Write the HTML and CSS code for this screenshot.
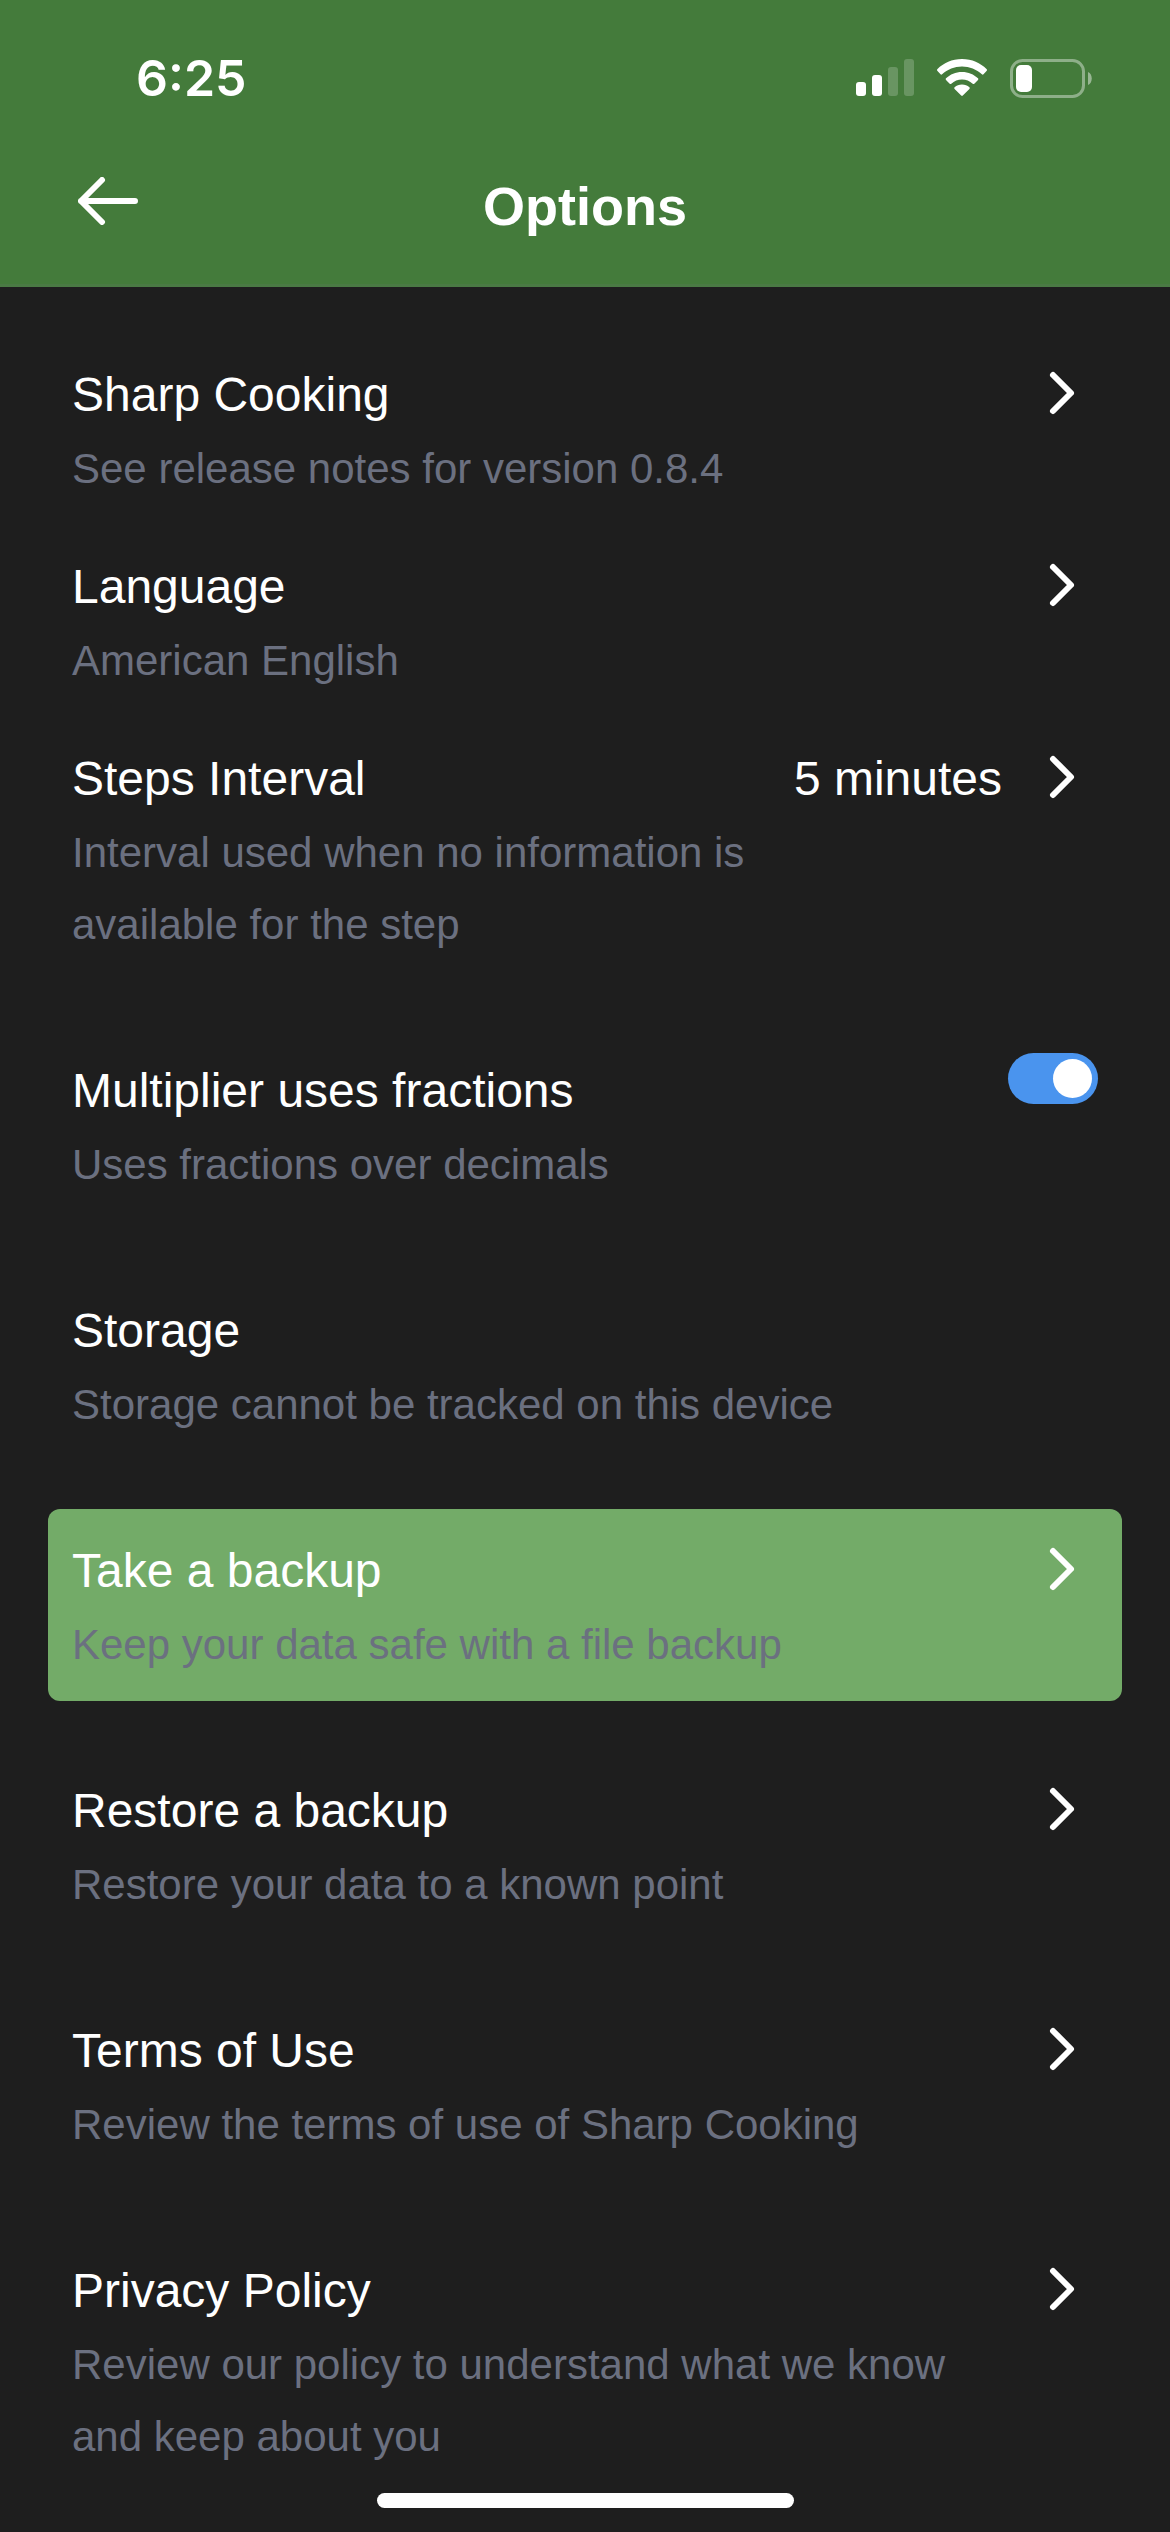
FILE: index.html
```html
<!DOCTYPE html>
<html lang="en">
<head>
<meta charset="utf-8">
<meta name="viewport" content="width=device-width, initial-scale=1">
<title>Options</title>
<link rel="stylesheet" href="styles.css">
</head>
<body>
<svg class="sprite" aria-hidden="true">
  <symbol id="chevron" viewBox="0 0 72 72">
    <path d="M27 18l18 18-18 18" fill="none" stroke="currentColor" stroke-width="6" stroke-linecap="round" stroke-linejoin="round"/>
  </symbol>
</svg>

<header class="header">
  <div class="status">
    <time class="clock">6:25</time>
    <div class="indicators">
      <svg width="58" height="38" viewBox="0 0 58 38" fill="#fff" role="img" aria-label="Signal">
        <rect x="0" y="23" width="10" height="14" rx="3"/>
        <rect x="16" y="16" width="10" height="21" rx="3"/>
        <rect x="32" y="8" width="10" height="29" rx="3" opacity=".2"/>
        <rect x="48" y="0" width="10" height="37" rx="3" opacity=".2"/>
      </svg>
      <svg width="50" height="38" viewBox="0 0 50 38" fill="#fff" role="img" aria-label="Wi-Fi">
        <path d="M25 0C35 0 43.500 4 49.500 10Q50.500 11 49.500 12L46.500 15.300Q45.700 16 44.900 15.300C39.500 10.300 32.500 7.500 25 7.500S10.500 10.300 5.100 15.300Q4.300 16 3.500 15.300L.500 12Q-.500 11 .500 10C6.500 4 15 0 25 0z"/>
        <path d="M25 13C31.500 13 36.700 15.300 41 19.300Q41.800 20 41 20.900L37.300 24.700Q36.500 25.400 35.700 24.700C32.700 22 29.200 20.500 25 20.500S17.300 22 14.300 24.700Q13.500 25.400 12.700 24.700L9 20.900Q8.200 20 9 19.300C13.300 15.300 18.500 13 25 13z"/>
        <path d="M25 25.500C28 25.500 30.300 26.500 32.400 28.200Q33.300 29 32.400 29.900L25.800 36.600Q25 37.300 24.200 36.600L17.600 29.900Q16.700 29 17.600 28.200C19.700 26.500 22 25.500 25 25.500z"/>
      </svg>
      <svg width="82" height="39" viewBox="0 0 82 39" role="img" aria-label="Battery">
        <rect x="1.500" y="1.500" width="72" height="36" rx="11" fill="none" stroke="#fff" stroke-width="3" opacity=".4"/>
        <path d="M78 13c5 2 5 11 0 13z" fill="#fff" opacity=".45"/>
        <rect x="6" y="6" width="16" height="27" rx="5" fill="#fff"/>
      </svg>
    </div>
  </div>
  <div class="titlebar">
    <button class="back" type="button" aria-label="Back">
      <svg width="60" height="48" viewBox="0 0 60 48" fill="none" stroke="currentColor" stroke-width="6" stroke-linecap="round" stroke-linejoin="round">
        <path d="M24 3L3 24l21 21M3 24h54"/>
      </svg>
    </button>
    <h1 class="title">Options</h1>
  </div>
</header>

<main class="options">
  <div class="group">
    <a class="row" href="#release-notes">
      <span class="text"><span class="name">Sharp Cooking</span><span class="note">See release notes for version 0.8.4</span></span>
      <svg class="chevron" aria-hidden="true"><use href="#chevron"/></svg>
    </a>
    <button class="row" type="button">
      <span class="text"><span class="name">Language</span><span class="note">American English</span></span>
      <svg class="chevron" aria-hidden="true"><use href="#chevron"/></svg>
    </button>
    <button class="row" type="button">
      <span class="text"><span class="name">Steps Interval</span><span class="note">Interval used when no information is available for the step</span></span>
      <span class="value">5 minutes</span>
      <svg class="chevron" aria-hidden="true"><use href="#chevron"/></svg>
    </button>
  </div>
  <label class="row" for="fractions">
    <span class="text"><span class="name">Multiplier uses fractions</span><span class="note">Uses fractions over decimals</span></span>
    <input class="switch" id="fractions" type="checkbox" role="switch" checked>
  </label>
  <div class="row">
    <span class="text"><span class="name">Storage</span><span class="note">Storage cannot be tracked on this device</span></span>
  </div>
  <button class="row row-active" type="button">
    <span class="text"><span class="name">Take a backup</span><span class="note">Keep your data safe with a file backup</span></span>
    <svg class="chevron" aria-hidden="true"><use href="#chevron"/></svg>
  </button>
  <button class="row" type="button">
    <span class="text"><span class="name">Restore a backup</span><span class="note">Restore your data to a known point</span></span>
    <svg class="chevron" aria-hidden="true"><use href="#chevron"/></svg>
  </button>
  <a class="row" href="#terms">
    <span class="text"><span class="name">Terms of Use</span><span class="note">Review the terms of use of Sharp Cooking</span></span>
    <svg class="chevron" aria-hidden="true"><use href="#chevron"/></svg>
  </a>
  <a class="row" href="#privacy">
    <span class="text"><span class="name">Privacy Policy</span><span class="note">Review our policy to understand what we know and keep about you</span></span>
    <svg class="chevron" aria-hidden="true"><use href="#chevron"/></svg>
  </a>
</main>

<footer class="home"><div class="home-bar"></div></footer>
</body>
</html>
```

FILE: styles.css
```css
* {
  box-sizing: border-box;
}

body {
  margin: 0;
  min-height: 100vh;
  display: flex;
  flex-direction: column;
  background: #1e1e1e;
  color: #fff;
  font-family: "Liberation Sans", Arial, sans-serif;
  font-size: 48px;
}

.sprite {
  display: none;
}

/* Header */
.header {
  background: #447b3b;
  border-bottom: 3px solid #4a7a44;
}

.status {
  display: flex;
  align-items: center;
  justify-content: space-between;
  padding: 48px 78px 0 136px;
}

.clock {
  font-family: Inter, sans-serif;
  font-size: 50px;
  font-weight: 600;
  line-height: 60px;
}

.indicators {
  display: flex;
  align-items: center;
  gap: 23px;
}

.titlebar {
  display: grid;
  grid-template-columns: 1fr auto 1fr;
  align-items: center;
  padding: 60px 78px 40px;
}

.back {
  justify-self: start;
  display: flex;
  padding: 0 0 10px;
  border: 0;
  background: none;
  color: inherit;
}

.title {
  margin: 0;
  font-size: 54px;
  font-weight: 700;
  line-height: 76px;
}

/* Option rows */
.options {
  flex: 1;
  display: flex;
  flex-direction: column;
  gap: 48px;
  padding: 46px 48px 0;
}

.group {
  display: flex;
  flex-direction: column;
}

.row {
  display: flex;
  align-items: flex-start;
  gap: 24px;
  width: 100%;
  padding: 24px 24px 20px;
  border: 0;
  border-radius: 12px;
  background: none;
  color: inherit;
  font: inherit;
  text-align: left;
  text-decoration: none;
}

.row-active {
  background: #73ab68;
}

.text {
  flex: 1;
  display: flex;
  flex-direction: column;
}

.name,
.value {
  line-height: 76px;
}

.note {
  color: #6b7080;
  font-size: 42px;
  line-height: 72px;
}

.value {
  white-space: nowrap;
}

.chevron {
  flex: none;
  width: 72px;
  height: 72px;
}

.switch {
  appearance: none;
  flex: none;
  display: flex;
  justify-content: flex-start;
  width: 90px;
  height: 51px;
  margin: 0;
  padding: 6px;
  border-radius: 26px;
  background: #4b5563;
}

.switch::before {
  content: "";
  width: 39px;
  height: 39px;
  border-radius: 50%;
  background: #fff;
}

.switch:checked {
  justify-content: flex-end;
  background: #4a94ee;
}

/* Home indicator */
.home {
  display: flex;
  justify-content: center;
  padding-bottom: 24px;
}

.home-bar {
  width: 417px;
  height: 15px;
  border-radius: 8px;
  background: #fff;
}
```
